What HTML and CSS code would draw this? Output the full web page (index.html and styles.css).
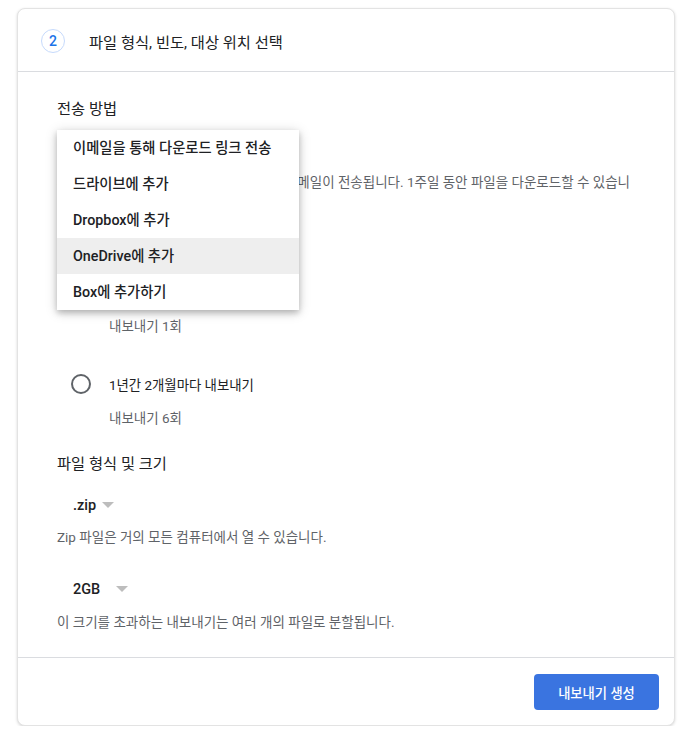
FILE: index.html
```html
<!DOCTYPE html>
<html lang="ko">
<head>
<meta charset="utf-8">
<title>파일 형식, 빈도, 대상 위치 선택</title>
<link rel="stylesheet" href="styles.css">
</head>
<body>
<div class="card">
  <div class="card-header">
    <span class="step">2</span>
    <span class="title">파일 형식, 빈도, 대상 위치 선택</span>
  </div>
  <div class="card-body">
    <div class="heading">전송 방법</div>
    <div class="select first-select">이메일을 통해 다운로드 링크 전송<span class="arrow"></span></div>
    <div class="desc wide">파일이 준비되면 다운로드 링크가 포함된 이메일이 전송됩니다. 1주일 동안 파일을 다운로드할 수 있습니다.</div>

    <div class="heading freq">빈도</div>
    <div class="radio-row r1"><span class="radio checked"></span><span class="radio-label">한 번 내보내기</span></div>
    <div class="sub s1">내보내기 1회</div>
    <div class="radio-row r2"><span class="radio"></span><span class="radio-label">1년간 2개월마다 내보내기</span></div>
    <div class="sub s2">내보내기 6회</div>

    <div class="heading fmt">파일 형식 및 크기</div>
    <div class="select zip">.zip<span class="arrow arrow-zip"></span></div>
    <div class="desc d-zip">Zip 파일은 거의 모든 컴퓨터에서 열 수 있습니다.</div>
    <div class="select size">2GB<span class="arrow arrow-size"></span></div>
    <div class="desc d-size">이 크기를 초과하는 내보내기는 여러 개의 파일로 분할됩니다.</div>

    <ul class="menu">
      <li class="menu-item">이메일을 통해 다운로드 링크 전송</li>
      <li class="menu-item">드라이브에 추가</li>
      <li class="menu-item">Dropbox에 추가</li>
      <li class="menu-item active">OneDrive에 추가</li>
      <li class="menu-item">Box에 추가하기</li>
    </ul>
  </div>
  <div class="card-footer">
    <button class="primary">내보내기 생성</button>
  </div>
</div>
</body>
</html>
```

FILE: styles.css
```css
* { box-sizing: border-box; }
html, body {
  margin: 0;
  padding: 0;
  background: #ffffff;
}
body {
  font-family: Roboto, "Noto Sans CJK KR", "Noto Sans", sans-serif;
  color: #202124;
  padding: 8px 14px 0 17px;
}
.card {
  width: 658px;
  height: 718px;
  border: 1px solid #e3e3e3;
  border-radius: 8px;
  box-shadow: 0 1px 3px rgba(0, 0, 0, 0.16);
  background: #fff;
  display: flex;
  flex-direction: column;
}
.card-header {
  height: 63px;
  border-bottom: 1px solid #dadce0;
  display: flex;
  align-items: center;
  padding-left: 23px;
  flex-shrink: 0;
}
.step {
  width: 24px;
  height: 24px;
  border: 1px solid #c6dafc;
  border-radius: 50%;
  color: #1a73e8;
  font-size: 14px;
  font-weight: 500;
  display: flex;
  align-items: center;
  justify-content: center;
  margin-top: 2px;
}
.title {
  margin-left: 24px;
  font-size: 15.3px;
  color: #202124;
  margin-top: 1px;
}
.card-body {
  position: relative;
  flex: 1;
  padding: 25px 40px 0 39px;
}
.heading {
  font-size: 15.3px;
  line-height: 24px;
  height: 24px;
  color: #202124;
}
.select {
  height: 36px;
  line-height: 36px;
  padding-left: 16px;
  font-size: 14.5px;
  font-weight: 500;
  color: #202124;
  display: flex;
  align-items: center;
}
.first-select { margin-top: 9px; }
.arrow {
  width: 0;
  height: 0;
  border-left: 6px solid transparent;
  border-right: 6px solid transparent;
  border-top: 6px solid #bdbdbd;
  margin-left: 8px;
}
.arrow-zip { margin-left: 6px; margin-top: -2px; }
.arrow-size { margin-left: 16px; margin-top: -2px; }
.desc {
  font-size: 13.5px;
  line-height: 20px;
  color: #5f6368;
}
.wide { margin-top: 6px; height: 40px; }
.freq { margin-top: 16px; }
.radio-row {
  height: 36px;
  display: flex;
  align-items: center;
  padding-left: 14px;
  font-size: 13.4px;
  color: #202124;
}
.r1 { margin-top: 22px; }
.r2 { margin-top: 30px; }
.radio {
  width: 20px;
  height: 20px;
  border: 2px solid #5f6368;
  border-radius: 50%;
  flex-shrink: 0;
}
.radio-label { margin-left: 18px; }
.sub {
  font-size: 13.5px;
  line-height: 20px;
  color: #5f6368;
  padding-left: 52px;
  margin-top: 6px;
}
.fmt { margin-top: 24px; }
.zip { margin-top: 12px; }
.d-zip { margin-top: 3px; }
.size { margin-top: 25px; }
.d-size { margin-top: 4px; }
.menu {
  position: absolute;
  left: 39px;
  top: 58px;
  width: 242px;
  margin: 0;
  padding: 0;
  list-style: none;
  background: #fff;
  box-shadow: 0 3px 6px rgba(0, 0, 0, 0.22), 0 2px 12px rgba(0, 0, 0, 0.16);
}
.menu-item {
  height: 36px;
  line-height: 36px;
  padding-left: 16px;
  font-size: 14.3px;
  font-weight: 500;
  color: #202124;
  white-space: nowrap;
}
.menu-item.active { background: #eeeeee; }
.card-footer {
  height: 68px;
  border-top: 1px solid #dadce0;
  display: flex;
  justify-content: flex-end;
  align-items: flex-start;
  padding: 16px 15px 0 0;
  flex-shrink: 0;
}
.primary {
  width: 125px;
  height: 36px;
  border: none;
  border-radius: 4px;
  background: #3a74e0;
  color: #fff;
  font-family: Roboto, "Noto Sans CJK KR", "Noto Sans", sans-serif;
  font-size: 13.3px;
  font-weight: 500;
}
```
